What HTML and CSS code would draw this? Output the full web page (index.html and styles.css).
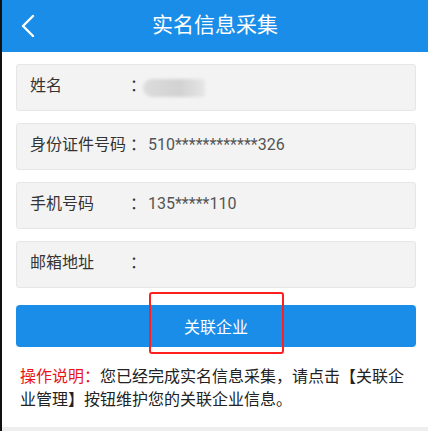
FILE: index.html
```html
<!DOCTYPE html>
<html lang="zh-CN">
<head>
    <meta charset="UTF-8">
    <meta name="viewport" content="width=device-width, initial-scale=1.0">
    <title>实名信息采集</title>
    <link rel="stylesheet" href="styles.css">
</head>
<body>
    <div class="app">
        <header class="top-bar">
            <a class="back-button" href="#">
                <svg width="14" height="24" viewBox="0 0 14 24">
                    <polyline points="12,2 2,12 12,22" fill="none" stroke="#fff" stroke-width="2.4" stroke-linecap="round" stroke-linejoin="round"/>
                </svg>
            </a>
            <h1>实名信息采集</h1>
        </header>

        <main class="content">
            <div class="info-row">
                <span class="info-label">姓名</span>
                <span class="info-colon">：</span>
                <span class="info-value"><span class="blurred-name"></span></span>
            </div>
            <div class="info-row">
                <span class="info-label">身份证件号码</span>
                <span class="info-colon">：</span>
                <span class="info-value">510************326</span>
            </div>
            <div class="info-row">
                <span class="info-label">手机号码</span>
                <span class="info-colon">：</span>
                <span class="info-value">135*****110</span>
            </div>
            <div class="info-row">
                <span class="info-label">邮箱地址</span>
                <span class="info-colon">：</span>
                <span class="info-value"></span>
            </div>

            <button class="link-button">
                关联企业
                <span class="highlight-box"></span>
            </button>

            <p class="notice">
                <span class="notice-title">操作说明：</span>您已经完成实名信息采集，请点击【关联企业管理】按钮维护您的关联企业信息。
            </p>
        </main>

        <div class="bottom-strip"></div>
    </div>
</body>
</html>
```

FILE: styles.css
```css
* {
    margin: 0;
    padding: 0;
    box-sizing: border-box;
    font-family: Roboto, "Noto Sans CJK SC", sans-serif;
}

body {
    background: #fff;
}

.app {
    height: 100vh;
    display: flex;
    flex-direction: column;
    border-left: 2px solid #111;
}

.top-bar {
    height: 52px;
    background: #1a8de8;
    display: flex;
    align-items: center;
    justify-content: center;
    position: relative;
}

.top-bar h1 {
    color: #fff;
    font-size: 21px;
    font-weight: 400;
    line-height: 1;
    margin-bottom: 2px;
}

.back-button {
    position: absolute;
    left: 19px;
    top: 14px;
    display: flex;
}

.content {
    flex: 1;
    padding: 12px 12px 0 14px;
}

.info-row {
    height: 47px;
    display: flex;
    align-items: center;
    background: #f3f3f3;
    border: 1px solid #e6e6e6;
    border-radius: 3px;
    padding-left: 13px;
    padding-bottom: 3px;
    margin-bottom: 12px;
    font-size: 16px;
    line-height: 1;
}

.info-label {
    width: 100px;
    color: #333;
}

.info-colon {
    width: 16px;
    color: #333;
    margin-right: 2px;
}

.info-value {
    color: #555;
    display: flex;
    align-items: center;
}

.blurred-name {
    display: inline-block;
    width: 62px;
    height: 18px;
    margin-left: -5px;
    margin-top: 3px;
    background: linear-gradient(90deg, #dcdcdc, #d2d2d2 60%, #e6e6e6);
    border-radius: 9px 4px 2px 9px;
    filter: blur(1.5px);
}

.link-button {
    display: block;
    width: 100%;
    height: 42px;
    margin-top: 17px;
    background: #1a8de8;
    color: #fff;
    border: none;
    border-radius: 4px;
    font-size: 16px;
    position: relative;
}

.highlight-box {
    position: absolute;
    left: 133px;
    top: -13px;
    width: 135px;
    height: 62px;
    border: 2.5px solid #ff1f1f;
    border-radius: 3px;
}

.notice {
    margin-top: 18px;
    padding-left: 4px;
    padding-right: 4px;
    font-size: 16px;
    line-height: 23px;
    color: #222;
}

.notice-title {
    color: #e8141a;
}

.bottom-strip {
    height: 4px;
    background: #eee;
}
```
